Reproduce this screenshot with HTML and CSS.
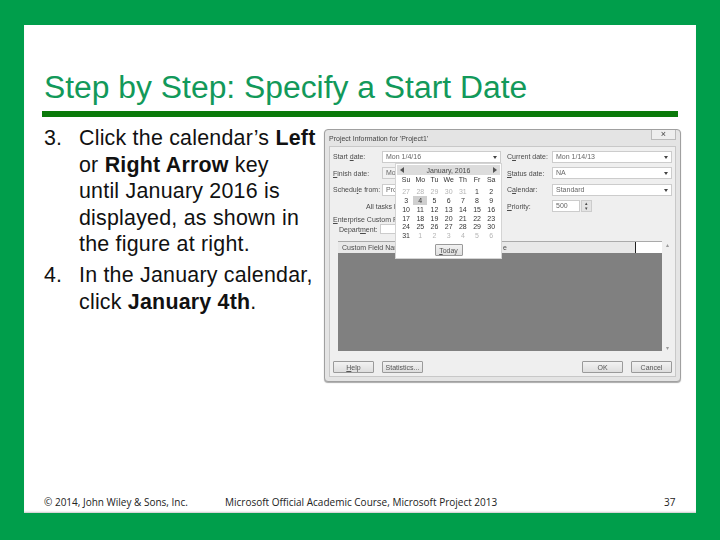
FILE: index.html
```html
<!DOCTYPE html>
<html lang="en">
<head>
<meta charset="utf-8">
<title>Step by Step: Specify a Start Date</title>
<link rel="stylesheet" href="styles.css">
</head>
<body>
<main class="slide">
  <h1 class="title">Step by Step: Specify a Start Date</h1>
  <div class="rule"></div>
  <div class="content">
    <ol class="steps">
      <li class="step"><span class="num">3.</span><span>Click the calendar’s <b>Left</b><br>or <b>Right Arrow</b> key<br>until January 2016 is<br>displayed, as shown in<br>the figure at right.</span></li>
      <li class="step"><span class="num">4.</span><span>In the January calendar,<br>click <b>January 4th</b>.</span></li>
    </ol>
    <section class="dialog">
      <div class="titlebar"><span>Project Information for 'Project1'</span><span class="close">×</span></div>
      <div class="panel">
        <div class="form">
          <div class="col">
            <div class="row"><label>Start <u>d</u>ate:</label><div class="field">Mon 1/4/16<i class="caret"></i></div></div>
            <div class="row"><label><u>F</u>inish date:</label><div class="field off">Mo</div></div>
            <div class="row"><label>Schedu<u>l</u>e from:</label><div class="field">Pro</div></div>
            <div class="row tasks">All tasks b</div>
          </div>
          <div class="col">
            <div class="row"><label>C<u>u</u>rrent date:</label><div class="field">Mon 1/14/13<i class="caret"></i></div></div>
            <div class="row"><label><u>S</u>tatus date:</label><div class="field">NA<i class="caret"></i></div></div>
            <div class="row"><label>C<u>a</u>lendar:</label><div class="field">Standard<i class="caret"></i></div></div>
            <div class="row"><label><u>P</u>riority:</label><div class="field short">500</div><div class="spin"><i>▴</i><i>▾</i></div></div>
          </div>
        </div>
        <div class="ecf"><u>E</u>nterprise Custom Fi</div>
        <div class="dept"><label>Depart<u>m</u>ent:</label><div class="field blank"></div></div>
        <div class="table">
          <div class="thead"><span class="th1">Custom Field Nam</span><span class="th2">e</span><span class="th3"></span></div>
          <div class="tbody"></div>
          <div class="scroll"><i>▴</i><i>▾</i></div>
        </div>
        <div class="actions">
          <button class="btn"><u>H</u>elp</button>
          <button class="btn">Statistics...</button>
          <span class="grow"></span>
          <button class="btn">OK</button>
          <button class="btn">Cancel</button>
        </div>
      </div>
      <div class="calendar">
        <div class="calhead"><i class="arr-l"></i><span>January, 2016</span><i class="arr-r"></i></div>
        <div class="days dow"><span>Su</span><span>Mo</span><span>Tu</span><span>We</span><span>Th</span><span>Fr</span><span>Sa</span></div>
        <div class="days">
          <span class="dim">27</span><span class="dim">28</span><span class="dim">29</span><span class="dim">30</span><span class="dim">31</span><span>1</span><span>2</span>
          <span>3</span><span class="sel">4</span><span>5</span><span>6</span><span>7</span><span>8</span><span>9</span>
          <span>10</span><span>11</span><span>12</span><span>13</span><span>14</span><span>15</span><span>16</span>
          <span>17</span><span>18</span><span>19</span><span>20</span><span>21</span><span>22</span><span>23</span>
          <span>24</span><span>25</span><span>26</span><span>27</span><span>28</span><span>29</span><span>30</span>
          <span>31</span><span class="dim">1</span><span class="dim">2</span><span class="dim">3</span><span class="dim">4</span><span class="dim">5</span><span class="dim">6</span>
        </div>
        <div class="today"><button class="btn todaybtn"><u>T</u>oday</button></div>
      </div>
    </section>
  </div>
  <footer class="footer">
    <span class="copy">© 2014, John Wiley &amp; Sons, Inc.</span>
    <span class="course">Microsoft Official Academic Course, Microsoft Project 2013</span>
    <span class="page">37</span>
  </footer>
</main>
</body>
</html>
```
FILE: styles.css
```css
* { box-sizing: border-box; }
html, body { margin: 0; height: 540px; overflow: hidden; }
body { background: #009e4b; padding: 25px 24px 27px; font-family: "Liberation Sans", sans-serif; }
i { font-style: normal; }

.slide { height: 488px; background: #fff; padding: 0 18px; display: flex; flex-direction: column;
  box-shadow: inset 0 -2px 2px -1px #c8c8c8; }
.title { margin: 0; height: 86px; display: flex; align-items: flex-end; padding: 0 0 6px 2px;
  font-size: 31.85px; font-weight: 400; line-height: 36px; color: #12995a; white-space: nowrap; }
.rule { height: 6px; background: #0a7a0a; flex: none; }

.content { flex: 1; display: flex; gap: 8px; padding-top: 8px; min-height: 0; }
.steps { list-style: none; margin: 0; padding: 0 0 0 2px; width: 274px; flex: none; font-size: 21.4px; letter-spacing: .22px; line-height: 26.6px; color: #111; white-space: nowrap; }
.step { display: flex; margin-bottom: 4.4px; }
.num { width: 35px; flex: none; }

.dialog { position: relative; width: 357px; height: 253px; margin-top: 4px; flex: none; background: #e4e4e4; border: 1px solid #a0a0a0; border-radius: 4px;
  display: flex; flex-direction: column; padding: 0 4px 4px; font-size: 7px; color: #4a4a4a; filter: blur(.5px);
  box-shadow: 0 1px 1px #aaa; }
.titlebar { height: 16px; flex: none; display: flex; justify-content: space-between; align-items: center; color: #444; }
.close { width: 25px; height: 10px; margin-top: -6px; border: 1px solid #bbb; border-top: 0; background: #eee; text-align: center; line-height: 9px; font-size: 9px; }
.panel { flex: 1; background: #efefef; border: 1px solid #c8c8c8; padding: 1.5px 3px 3px; display: flex; flex-direction: column; }

.form { display: grid; grid-template-columns: 168px 165px; gap: 0 6px; }
.col { display: flex; flex-direction: column; }
.row { height: 16.5px; display: flex; align-items: center; }
.row label { width: 49px; flex: none; white-space: nowrap; }
.col + .col .row label { width: 45px; }
.field { position: relative; flex: 1; height: 12px; background: #fff; border: 1px solid #ccc; line-height: 10px; padding-left: 3px; color: #666; white-space: nowrap; }
.field.off { background: #f2f2f2; }
.field.short { flex: none; width: 28px; }
.caret { position: absolute; right: 3px; top: 4px; border: 2.5px solid transparent; border-top: 3px solid #444; border-bottom: 0; }
.spin { display: flex; flex-direction: column; width: 11px; height: 12px; margin-left: 1px; border: 1px solid #ccc; background: #e4e4e4; font-size: 5px; line-height: 5px; text-align: center; }
.tasks { padding-left: 33px; white-space: nowrap; }
.ecf { height: 8px; line-height: 8px; margin-top: 1.5px; white-space: nowrap; }
.dept { height: 10px; display: flex; align-items: center; padding-left: 6px; gap: 4px; }
.dept label { width: 37px; }
.dept .blank { flex: none; width: 80px; height: 10px; }

.table { flex: none; height: 110px; margin: 7px 0 0 5px; display: grid; grid-template-columns: 324px 11px; grid-template-rows: 12px 1fr; }
.thead { display: grid; grid-template-columns: 146px 1fr 27px; background: #e8e8e8; border-top: 1px solid #aaa; line-height: 11px; }
.th1 { padding-left: 4px; white-space: nowrap; }
.th2 { padding-left: 19px; }
.th3 { background: #fff; border-left: 1px solid #222; }
.tbody { grid-column: 1; grid-row: 2; background: #808080; }
.scroll { grid-column: 2; grid-row: 1 / 3; display: flex; flex-direction: column; justify-content: space-between; align-items: center; color: #999; font-size: 6px; }

.actions { display: flex; gap: 8px; margin-top: auto; }
.grow { flex: 1; margin-right: -1px; }
.btn { width: 41px; height: 12px; padding: 0; background: linear-gradient(#f2f2f2, #dedede); border: 1px solid #9a9a9a; border-radius: 1px; font: inherit; color: #555; line-height: 9px; }

.calendar { position: absolute; left: 70px; top: 33px; width: 107px; height: 96px; background: #fff; border: 1px solid #d4d4d4; padding: 1px 3px; }
.calhead { height: 10px; background: #dcdcdc; margin: 0 -2px; display: flex; justify-content: space-between; align-items: center; padding: 0 3px; font-size: 7px; }
.arr-l { border: 3px solid transparent; border-right: 4px solid #555; border-left: 0; }
.arr-r { border: 3px solid transparent; border-left: 4px solid #555; border-right: 0; }
.days { display: grid; grid-template-columns: repeat(7, 14.2px); grid-auto-rows: 8.85px; text-align: center; font-size: 7px; line-height: 9px; color: #333; }
.dow { grid-auto-rows: 10px; line-height: 10px; padding-bottom: 2px; }
.dim { color: #b5b5b5; }
.sel { background: #cfcfcf; }
.today { display: flex; justify-content: center; margin-top: 4px; }
.todaybtn { width: 28px; height: 12px; }

.footer { margin-top: auto; height: 17px; display: flex; font-family: "Open Sans", sans-serif; font-size: 10px; color: #222; padding: 0 2px; line-height: 12px; }
.copy { width: 181px; }
.course { flex: 1; }
.page { width: 12px; }
```
